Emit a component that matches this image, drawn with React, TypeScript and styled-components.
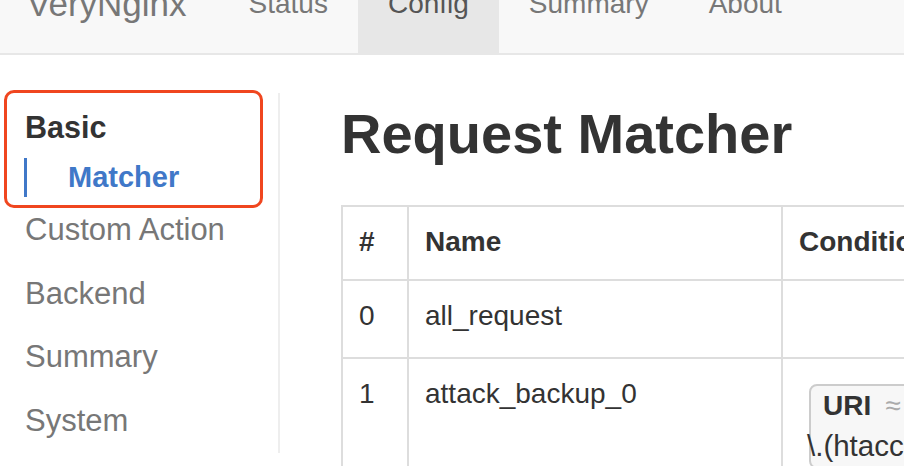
import * as React from "react";
import styled, { createGlobalStyle } from "styled-components";

const GlobalStyle = createGlobalStyle`
    html, body {
        margin: 0;
        padding: 0;
        overflow: hidden;
        background: #fff;
    }
    body {
        font-family: "Liberation Sans", Arial, sans-serif;
        color: #333;
    }
`

// The screenshot is scrolled a little, so the navbar sits partly above the top
const Page = styled.div`
    margin-top: -47px;
    width: 1400px;
`

const Navbar = styled.nav`
    display: flex;
    height: 100px;
    background-color: #f8f8f8;
    border-bottom: 2px solid #e7e7e7;
`

const Brand = styled.div`
    padding: 31px 32px 0 27px;
    font-size: 35px;
    line-height: 40px;
    color: #777;
`

const NavLink = styled.div<{ $active?: boolean }>`
    padding: 31px 30px 0;
    font-size: 28px;
    line-height: 40px;
    color: ${p => p.$active ? "#555" : "#777"};
    background-color: ${p => p.$active ? "#e7e7e7" : "transparent"};
`

const Body = styled.div`
    display: flex;
    align-items: flex-start;
`

const Sidebar = styled.div`
    position: relative;
    flex: 0 0 280px;
    box-sizing: border-box;
    margin-top: 38px;
    padding-top: 12px;
    height: 360px;
    border-right: 2px solid #eee;
`

const Highlight = styled.div`
    position: absolute;
    left: 4px;
    top: -3px;
    width: 259px;
    height: 118px;
    box-sizing: border-box;
    border: 3px solid #f0461f;
    border-radius: 10px;
    pointer-events: none;
`

const GroupTitle = styled.div`
    padding-left: 25px;
    font-size: 30.5px;
    font-weight: bold;
    line-height: 44px;
    color: #333;
`

const SubItem = styled.div`
    margin: 9px 0 1px 24px;
    padding-left: 41px;
    border-left: 3px solid #4078c8;
    font-size: 29px;
    font-weight: bold;
    line-height: 39px;
    color: #4078c8;
`

const SideItem = styled.div`
    padding-left: 25px;
    font-size: 31px;
    line-height: 63.5px;
    color: #777;
`

const Main = styled.main`
    flex: 0 0 auto;
    padding: 48px 0 0 61px;
`

const Title = styled.h1`
    margin: 0 0 41px;
    font-size: 56px;
    font-weight: bold;
    line-height: 61px;
    color: #333;
`

const Table = styled.table`
    border-collapse: collapse;
    table-layout: fixed;
    width: 900px;
    border: 2px solid #ddd;
    font-size: 28px;
    line-height: 40px;
    color: #333;

    & th, & td {
        border: 2px solid #ddd;
        text-align: left;
        vertical-align: top;
    }
`

const Col = styled.col<{ $w: number }>`
    width: ${p => p.$w}px;
`

const HeadCell = styled.th`
    padding: 15px 16px 17px;
    font-weight: bold;
    white-space: nowrap;
`

const Cell = styled.td`
    padding: 15px 16px 21px;
    white-space: nowrap;
    overflow: visible;
`

const Condition = styled.div`
    display: inline-block;
    margin: 10px 0 0 10px;
    width: 200px;
    box-sizing: border-box;
    border: 2px solid #ccc;
    border-radius: 8px;
    background-color: #f7f7f7;
`

const CondKey = styled.div`
    padding: 1px 0 0 12px;
    line-height: 38px;
    font-weight: bold;
`

const CondOp = styled.span`
    margin-left: 14px;
    font-weight: normal;
    font-size: 28px;
    color: #aaa;
`

const CondValue = styled.div`
    margin-left: -4px;
    font-size: 29.5px;
    line-height: 42px;
`

const matchers = [
    { id: 0, name: "all_request", conditions: [] as { key: string, value: string }[] },
    { id: 1, name: "attack_backup_0", conditions: [{ key: "URI", value: "\\.(htaccess|bash_history|ssh|sql)$" }] },
]

export default function App() {
    return (
        <Page>
            <GlobalStyle />
            <Navbar>
                <Brand>VeryNginx</Brand>
                <NavLink>Status</NavLink>
                <NavLink $active>Config</NavLink>
                <NavLink>Summary</NavLink>
                <NavLink>About</NavLink>
            </Navbar>
            <Body>
                <Sidebar>
                    <Highlight />
                    <GroupTitle>Basic</GroupTitle>
                    <SubItem>Matcher</SubItem>
                    <SideItem>Custom Action</SideItem>
                    <SideItem>Backend</SideItem>
                    <SideItem>Summary</SideItem>
                    <SideItem>System</SideItem>
                </Sidebar>
                <Main>
                    <Title>Request Matcher</Title>
                    <Table>
                        <colgroup>
                            <Col $w={66} />
                            <Col $w={374} />
                            <Col $w={460} />
                        </colgroup>
                        <thead>
                            <tr>
                                <HeadCell>#</HeadCell>
                                <HeadCell>Name</HeadCell>
                                <HeadCell>Condition</HeadCell>
                            </tr>
                        </thead>
                        <tbody>
                            {matchers.map(m =>
                                <tr key={m.id}>
                                    <Cell>{m.id}</Cell>
                                    <Cell>{m.name}</Cell>
                                    <Cell>
                                        {m.conditions.map((c, i) =>
                                            <Condition key={i}>
                                                <CondKey>{c.key}<CondOp>≈</CondOp></CondKey>
                                                <CondValue>{c.value}</CondValue>
                                            </Condition>
                                        )}
                                    </Cell>
                                </tr>
                            )}
                        </tbody>
                    </Table>
                </Main>
            </Body>
        </Page>
    )
}
